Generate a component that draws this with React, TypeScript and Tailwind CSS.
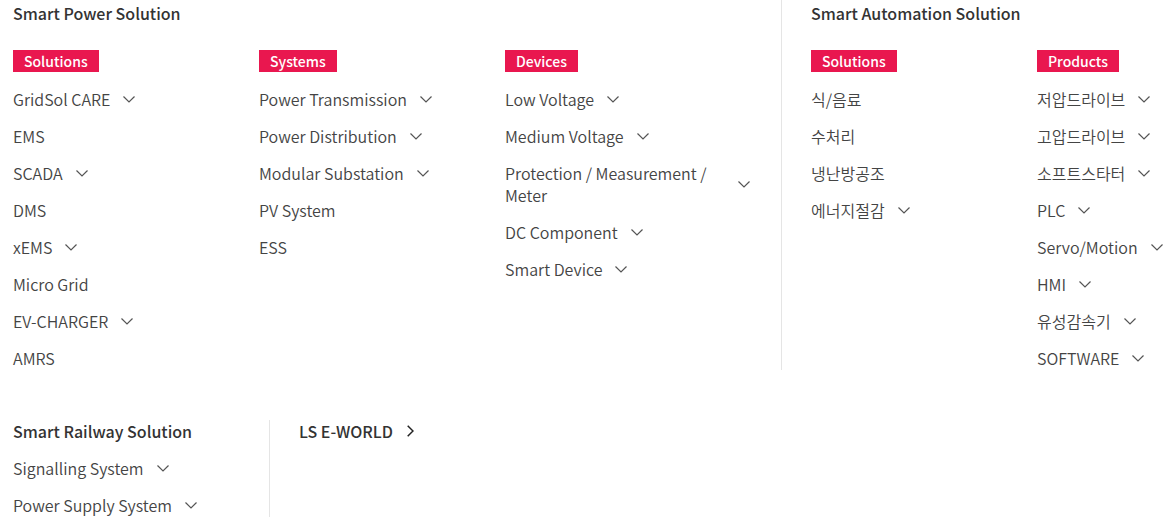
import type { ReactNode } from 'react'

type Item = { label: string; sub?: boolean }

const font = { fontFamily: '"Noto Sans CJK KR", "Noto Sans", sans-serif' }

const powerCols: { tag: string; items: Item[] }[] = [
  {
    tag: 'Solutions',
    items: [
      { label: 'GridSol CARE', sub: true },
      { label: 'EMS' },
      { label: 'SCADA', sub: true },
      { label: 'DMS' },
      { label: 'xEMS', sub: true },
      { label: 'Micro Grid' },
      { label: 'EV-CHARGER', sub: true },
      { label: 'AMRS' },
    ],
  },
  {
    tag: 'Systems',
    items: [
      { label: 'Power Transmission', sub: true },
      { label: 'Power Distribution', sub: true },
      { label: 'Modular Substation', sub: true },
      { label: 'PV System' },
      { label: 'ESS' },
    ],
  },
  {
    tag: 'Devices',
    items: [
      { label: 'Low Voltage', sub: true },
      { label: 'Medium Voltage', sub: true },
      { label: 'Protection / Measurement / Meter', sub: true },
      { label: 'DC Component', sub: true },
      { label: 'Smart Device', sub: true },
    ],
  },
]

const automationCols: { tag: string; items: Item[] }[] = [
  {
    tag: 'Solutions',
    items: [
      { label: '식/음료' },
      { label: '수처리' },
      { label: '냉난방공조' },
      { label: '에너지절감', sub: true },
    ],
  },
  {
    tag: 'Products',
    items: [
      { label: '저압드라이브', sub: true },
      { label: '고압드라이브', sub: true },
      { label: '소프트스타터', sub: true },
      { label: 'PLC', sub: true },
      { label: 'Servo/Motion', sub: true },
      { label: 'HMI', sub: true },
      { label: '유성감속기', sub: true },
      { label: 'SOFTWARE', sub: true },
    ],
  },
]

const railway: Item[] = [
  { label: 'Signalling System', sub: true },
  { label: 'Power Supply System', sub: true },
]

function ChevronDown() {
  return (
    <svg width="12" height="7" viewBox="0 0 12 7" className="shrink-0 ml-[13px]" fill="none">
      <polyline points="0.5,0.5 6,6 11.5,0.5" stroke="#555" strokeWidth="1.2" />
    </svg>
  )
}

function ChevronRight() {
  return (
    <svg width="7" height="12" viewBox="0 0 7 12" className="shrink-0 ml-[14px]" fill="none">
      <polyline points="0.7,0.7 6,6 0.7,11.3" stroke="#222" strokeWidth="1.5" />
    </svg>
  )
}

function MenuItem({ item }: { item: Item }) {
  return (
    <li className="flex items-center text-[16px] leading-[22px] font-[350] text-[#444]">
      <span>{item.label}</span>
      {item.sub && <ChevronDown />}
    </li>
  )
}

function Tag({ children }: { children: ReactNode }) {
  return (
    <span className="inline-block bg-[#e9174f] text-white text-[14px] leading-[22px] px-[11px] font-medium">
      {children}
    </span>
  )
}

function Column({ tag, items, width }: { tag: string; items: Item[]; width: string }) {
  return (
    <div className={width}>
      <Tag>{tag}</Tag>
      <ul className="mt-[16px] flex flex-col gap-[15px]">
        {items.map((it) => (
          <MenuItem key={it.label} item={it} />
        ))}
      </ul>
    </div>
  )
}

function Heading({ children }: { children: ReactNode }) {
  return <h3 className="text-[16px] leading-[22px] font-medium text-[#333]">{children}</h3>
}

export default function App() {
  return (
    <div className="bg-white w-[1169px] h-[532px] overflow-hidden" style={font}>
      <div className="flex">
        <div className="pl-[13px] pt-[2px] w-[781px]">
          <Heading>Smart Power Solution</Heading>
          <div className="flex mt-[24px]">
            {powerCols.map((c) => (
              <Column key={c.tag} tag={c.tag} items={c.items} width="w-[246px] pr-[1px]" />
            ))}
          </div>
        </div>
        <div className="border-l border-[#e5e5e5] pl-[29px] pt-[2px] flex-1 min-w-0 h-[370px]">
          <Heading>Smart Automation Solution</Heading>
          <div className="flex mt-[24px]">
            {automationCols.map((c) => (
              <Column key={c.tag} tag={c.tag} items={c.items} width="w-[226px] shrink-0" />
            ))}
          </div>
        </div>
      </div>

      <div className="flex mt-[50px]">
        <div className="pl-[13px] w-[269px]">
          <Heading>Smart Railway Solution</Heading>
          <ul className="mt-[15px] flex flex-col gap-[15px]">
            {railway.map((it) => (
              <MenuItem key={it.label} item={it} />
            ))}
          </ul>
        </div>
        <div className="border-l border-[#e5e5e5] pl-[29px] h-[97px]">
          <div className="flex items-center">
            <Heading>LS E-WORLD</Heading>
            <ChevronRight />
          </div>
        </div>
      </div>
    </div>
  )
}
